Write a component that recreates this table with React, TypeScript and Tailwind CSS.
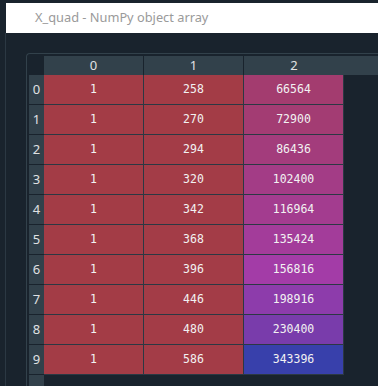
const data: number[][] = [
  [1, 258, 66564],
  [1, 270, 72900],
  [1, 294, 86436],
  [1, 320, 102400],
  [1, 342, 116964],
  [1, 368, 135424],
  [1, 396, 156816],
  [1, 446, 198916],
  [1, 480, 230400],
  [1, 586, 343396],
];

const vmin = Math.min(...data.flat());
const vmax = Math.max(...data.flat());

// same scheme as the array editor: hue .66 -> .99, sat .7, val 1, alpha .6
function cellColor(v: number) {
  const hue = 0.66 + (0.33 * (vmax - v)) / (vmax - vmin);
  const h = hue * 6;
  const i = Math.floor(h) % 6;
  const f = h - Math.floor(h);
  const s = 0.7;
  const p = 1 - s;
  const q = 1 - s * f;
  const t = 1 - s * (1 - f);
  const rgb = [
    [1, t, p],
    [q, 1, p],
    [p, 1, t],
    [p, q, 1],
    [t, p, 1],
    [1, p, q],
  ][i];
  const bg = [25, 35, 45];
  const [r, g, b] = rgb.map((c, k) => Math.round(0.6 * c * 255 + 0.4 * bg[k]));
  return `rgb(${r}, ${g}, ${b})`;
}

export default function App() {
  return (
    <div className="w-[378px] h-[386px] bg-[#19232d] overflow-hidden flex flex-col" style={{ fontFamily: "'Noto Sans', sans-serif" }}>
      <div className="h-[3px] shrink-0" />
      <div className="ml-[6px] h-[30px] shrink-0 bg-white flex items-center pl-[29px] text-[12.8px] text-[#9a9a9a]">
        X_quad - NumPy object array
      </div>
      <div className="flex flex-1 min-h-0">
        <div className="w-[5px]" />
        <div className="w-px bg-[#2b3843]" />
        <div className="w-[20px]" />
        <div className="flex-1 mt-[20px] rounded-tl-[4px] border-l border-t border-[#32414b] pl-[2px] pt-[2px] flex flex-col">
          <div className="flex h-[19px] shrink-0">
            <div className="w-[15px]" />
            <div className="flex-1 bg-[#32414b] flex text-[13px] text-[#e0e1e3]">
              {[0, 1, 2].map((c) => (
                <div key={c} className={c < 2 ? "w-[100px] border-r border-[#19232d] flex items-center justify-center" : "w-[100px] flex items-center justify-center"}>
                  {c}
                </div>
              ))}
            </div>
          </div>
          <div className="flex flex-1">
            <div className="w-[15px] bg-[#32414b] flex flex-col text-[13px] text-[#e0e1e3]">
              {data.map((_, r) => (
                <div key={r} className="h-[30px] border-b border-[#19232d] flex items-center justify-center">
                  {r}
                </div>
              ))}
            </div>
            <div className="flex flex-col" style={{ fontFamily: "'DejaVu Sans Mono', monospace" }}>
              {data.map((row, r) => (
                <div key={r} className="flex h-[30px]">
                  {row.map((v, c) => (
                    <div
                      key={c}
                      className="w-[100px] border-r border-b border-[#2b3843] flex items-center justify-center text-[11.5px] text-[#f2f2f2]"
                      style={{ backgroundColor: cellColor(v) }}
                    >
                      {v}
                    </div>
                  ))}
                </div>
              ))}
            </div>
          </div>
        </div>
      </div>
    </div>
  );
}
